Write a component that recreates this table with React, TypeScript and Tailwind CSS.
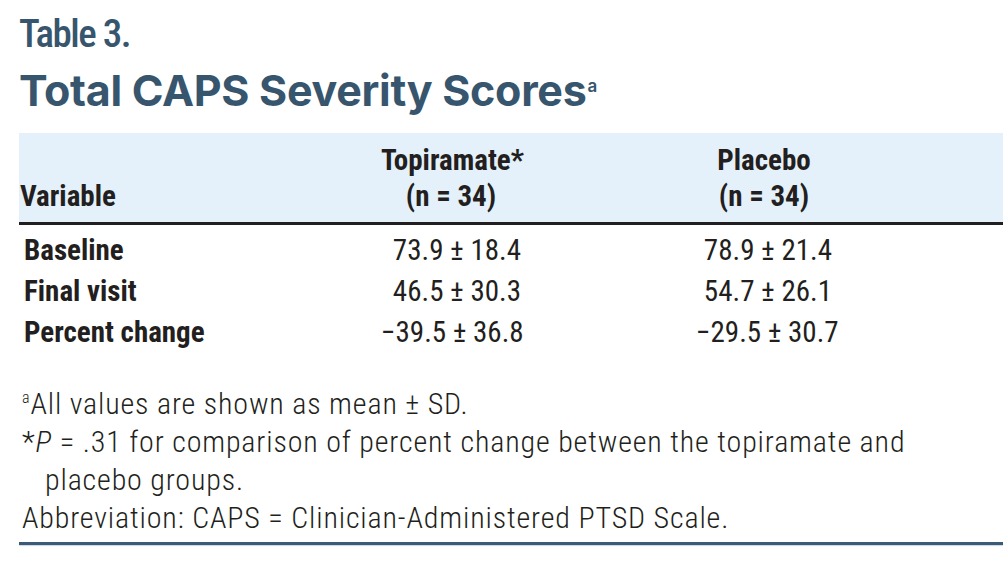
const rows = [
  { label: "Baseline", topiramate: "73.9 ± 18.4", placebo: "78.9 ± 21.4" },
  { label: "Final visit", topiramate: "46.5 ± 30.3", placebo: "54.7 ± 26.1" },
  { label: "Percent change", topiramate: "−39.5 ± 36.8", placebo: "−29.5 ± 30.7" },
];

export default function App() {
  return (
    <div className="w-[1008px] h-[564px] bg-white pl-[19px] pr-[5px] text-[#231f20] font-['Roboto_Condensed',sans-serif]">
      {/* titre */}
      <div className="pt-[12px] text-[39px] leading-[44px] font-medium tracking-[-1.5px] text-[#37566e]">Table 3.</div>
      <div className="mt-[10px] text-[43px] leading-[48px] font-bold tracking-[-0.3px] text-[#37566e] font-['Inter',sans-serif] whitespace-nowrap">
        Total CAPS Severity Scores
        <span className="relative -top-[14px] ml-[1px] text-[17px] leading-none font-semibold">a</span>
      </div>

      {/* tableau */}
      <div className="mt-[19px]">
        <div className="grid grid-cols-[362px_140px_175px_136px] items-end bg-[#e4f1fa] h-[92px] border-b-[3px] border-[#231f20] pb-[8px] text-[29px] leading-[36px] font-bold">
          <div className="pl-[1px]">Variable</div>
          <div className="text-center whitespace-nowrap">
            Topiramate*
            <br />
            (n = 34)
          </div>
          <div />
          <div className="text-center whitespace-nowrap">
            Placebo
            <br />
            (n = 34)
          </div>
        </div>

        <div className="pt-[5px] text-[29px] leading-[41px]">
          {rows.map((row) => (
            <div key={row.label} className="grid grid-cols-[362px_140px_175px_136px] whitespace-nowrap">
              <div className="pl-[5px] font-bold">{row.label}</div>
              <div className="text-right">{row.topiramate}</div>
              <div />
              <div className="text-right">{row.placebo}</div>
            </div>
          ))}
        </div>
      </div>

      {/* notes */}
      <div className="mt-[32px] text-[30px] leading-[38px] tracking-[0.85px] pl-[3px] font-light whitespace-nowrap">
        <p>
          <span className="relative -top-[11px] text-[16px] leading-none">a</span>All values are shown as mean ± SD.
        </p>
        <p>
          *<i>P</i> = .31 for comparison of percent change between the topiramate and
        </p>
        <p className="pl-[23px]">placebo groups.</p>
        <p>Abbreviation: CAPS = Clinician-Administered PTSD Scale.</p>
      </div>
      <div className="mt-[5px] h-[3px] bg-[#3b5a75] shadow-[0_1px_1px_#c9d6e2]" />
    </div>
  );
}
